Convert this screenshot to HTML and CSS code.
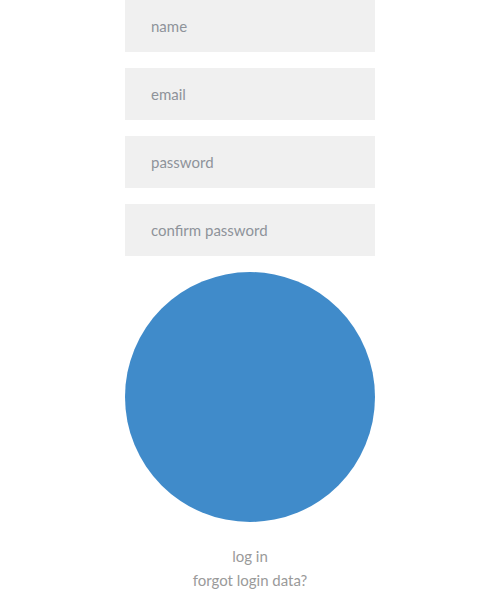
FILE: index.html
```html
<!DOCTYPE html>
<html>
<head>
<meta charset="utf-8">
<link rel="stylesheet" href="styles.css">
</head>
<body>
<form class="form">
  <input class="field" type="text" placeholder="name">
  <input class="field" type="email" placeholder="email">
  <input class="field" type="password" placeholder="password">
  <input class="field" type="password" placeholder="confirm password">
  <button class="submit" type="button" aria-label="sign up"></button>
  <div class="links">
    <a class="link" href="#">log in</a>
    <a class="link" href="#">forgot login data?</a>
  </div>
</form>
</body>
</html>
```
FILE: styles.css
```css
html, body {
  margin: 0;
  padding: 0;
  background: #ffffff;
}
body {
  font-family: Lato, "Noto Sans", sans-serif;
}
.form {
  width: 250px;
  margin: 0 auto;
  display: flex;
  flex-direction: column;
  gap: 16px;
}
.field {
  box-sizing: border-box;
  height: 52px;
  width: 250px;
  border: none;
  outline: none;
  background: #f0f0f0;
  padding: 0 26px 1px;
  font-family: inherit;
  font-size: 15px;
  color: #555;
}
.field::placeholder {
  color: #8e939a;
  opacity: 1;
}
.submit {
  width: 250px;
  height: 250px;
  border: none;
  border-radius: 50%;
  background: #408bca;
  padding: 0;
}
.links {
  display: flex;
  flex-direction: column;
  align-items: center;
  margin-top: 6px;
}
.link {
  font-size: 15px;
  line-height: 24px;
  color: #9a9a9a;
  text-decoration: none;
}
```
